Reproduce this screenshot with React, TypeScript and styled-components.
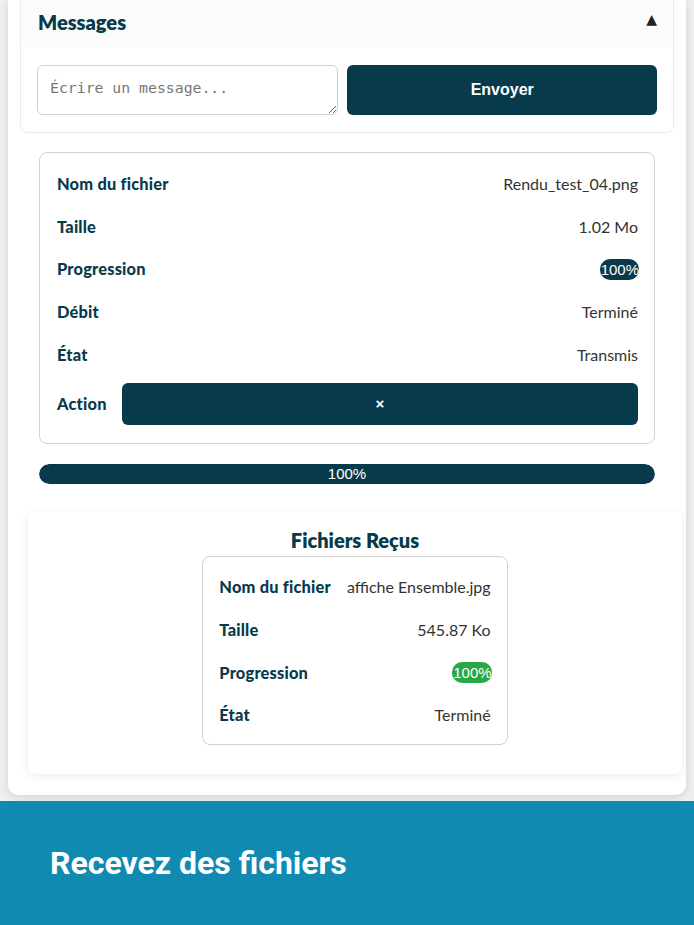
import React from "react";
import styled, { createGlobalStyle } from "styled-components";

const Global = createGlobalStyle`
  html, body { margin: 0; padding: 0; background: #efefef; }
  body { font-family: Lato, "Noto Sans", sans-serif; color: #333; overflow: hidden; }
  * { box-sizing: border-box; }
`;

const NAVY = "#073b4c";

const Page = styled.div`
  display: flex;
  flex-direction: column;
`;

const MainCard = styled.div`
  margin: 0 8px;
  background: #fff;
  border-radius: 0 0 10px 10px;
  box-shadow: 0 2px 8px rgba(0, 0, 0, 0.12);
  padding: 0 12px 21px;
  display: flex;
  flex-direction: column;
`;

const MessagesCard = styled.section`
  border: 1px solid #ececec;
  border-top: none;
  border-radius: 0 0 8px 8px;
  background: #fff;
`;

const MessagesHeader = styled.div`
  height: 47px;
  background: #fbfbfb;
  display: flex;
  align-items: center;
  justify-content: space-between;
  padding: 0 16px 4px 17px;
`;

const HeaderTitle = styled.h3`
  margin: 0;
  font-size: 20px;
  font-weight: 800;
  color: ${NAVY};
`;

const Caret = styled.span`
  font-family: "DejaVu Sans", sans-serif;
  font-size: 14px;
  color: #222;
  margin-top: -6px;
`;

const MessageForm = styled.div`
  display: grid;
  grid-template-columns: 301fr 309fr;
  gap: 9px;
  padding: 18px 16px 17px;
`;

const MessageInput = styled.textarea`
  height: 50px;
  border: 1px solid #cfcfcf;
  border-radius: 6px;
  padding: 13px 12px;
  font-family: "DejaVu Sans Mono", monospace;
  font-size: 14.8px;
  resize: vertical;
  &::placeholder { color: #767676; }
`;

const SendButton = styled.button`
  height: 50px;
  border: none;
  border-radius: 6px;
  background: ${NAVY};
  color: #fff;
  font-family: "Liberation Sans", Arial, sans-serif;
  font-weight: 700;
  font-size: 16px;
`;

const InfoCard = styled.div<{ $centered?: boolean }>`
  border: 1px solid #d2d2d2;
  border-radius: 8px;
  display: flex;
  flex-direction: column;
  ${(p) =>
    p.$centered
      ? `align-self: center; margin-top: 4px; padding: 9px 16px 7px 16px; width: max-content;`
      : `margin: 19px 19px 0; padding: 9.5px 16px 12px 17px;`}
`;

const Row = styled.div`
  min-height: 42.7px;
  display: flex;
  align-items: center;
  justify-content: space-between;
  gap: 16px;
  font-size: 16px;
  line-height: 20px;
`;

const ActionRow = styled(Row)`
  padding: 7px 0 6px;
  gap: 15px;
`;

const Label = styled.span`
  font-weight: 900;
  font-size: 16.4px;
  letter-spacing: 0.2px;
  color: ${NAVY};
`;

const Value = styled.span`
  color: #333;
`;

const Badge = styled.span<{ $tone: "navy" | "green" }>`
  background: ${(p) => (p.$tone === "navy" ? NAVY : "#28a745")};
  color: #fff;
  border-radius: 10px;
  font-family: "Liberation Sans", Arial, sans-serif;
  font-size: 15px;
  line-height: 21px;
  padding: 0 0 0 1px;
  margin-right: -1px;
`;

const CancelButton = styled.button`
  flex: 1;
  height: 42px;
  border: none;
  border-radius: 6px;
  background: ${NAVY};
  color: #fff;
  font-family: "Liberation Sans", Arial, sans-serif;
  font-weight: 700;
  font-size: 15px;
`;

const ProgressTrack = styled.div`
  margin: 20px 19px 0;
  height: 20px;
  border-radius: 10px;
  background: #e9ecef;
  overflow: hidden;
`;

const ProgressFill = styled.div`
  height: 100%;
  background: ${NAVY};
  border-radius: 10px;
  color: #fff;
  font-family: "Liberation Sans", Arial, sans-serif;
  font-size: 15px;
  line-height: 20px;
  text-align: center;
`;

const ReceivedCard = styled.section`
  margin: 27px -8px 0 8px;
  background: #fff;
  border-radius: 8px;
  box-shadow: 0 2px 10px rgba(0, 0, 0, 0.08);
  padding: 17px 0 29px;
  display: flex;
  flex-direction: column;
`;

const ReceivedTitle = styled.h4`
  margin: 0;
  text-align: center;
  font-size: 20px;
  line-height: 24px;
  font-weight: 800;
  color: ${NAVY};
`;

const Banner = styled.div`
  margin-top: 6px;
  background: #118ab2;
  padding: 44px 50px 50px;
  height: 130px;
`;

const BannerTitle = styled.h2`
  margin: 0;
  font-family: Roboto, sans-serif;
  font-weight: 700;
  font-size: 32px;
  line-height: 36px;
  color: #fff;
`;

export default function App() {
  const pct = 100;
  return (
    <Page>
      <Global />
      <MainCard>
        <MessagesCard>
          <MessagesHeader>
            <HeaderTitle>Messages</HeaderTitle>
            <Caret>▲</Caret>
          </MessagesHeader>
          <MessageForm>
            <MessageInput placeholder="Écrire un message..." />
            <SendButton>Envoyer</SendButton>
          </MessageForm>
        </MessagesCard>

        <InfoCard>
          <Row>
            <Label>Nom du fichier</Label>
            <Value>Rendu_test_04.png</Value>
          </Row>
          <Row>
            <Label>Taille</Label>
            <Value>1.02 Mo</Value>
          </Row>
          <Row>
            <Label>Progression</Label>
            <Badge $tone="navy">100%</Badge>
          </Row>
          <Row>
            <Label>Débit</Label>
            <Value>Terminé</Value>
          </Row>
          <Row>
            <Label>État</Label>
            <Value>Transmis</Value>
          </Row>
          <ActionRow>
            <Label>Action</Label>
            <CancelButton>×</CancelButton>
          </ActionRow>
        </InfoCard>

        <ProgressTrack>
          <ProgressFill style={{ width: `${pct}%` }}>{pct}%</ProgressFill>
        </ProgressTrack>

        <ReceivedCard>
          <ReceivedTitle>Fichiers Reçus</ReceivedTitle>
          <InfoCard $centered>
            <Row>
              <Label>Nom du fichier</Label>
              <Value>affiche Ensemble.jpg</Value>
            </Row>
            <Row>
              <Label>Taille</Label>
              <Value>545.87 Ko</Value>
            </Row>
            <Row>
              <Label>Progression</Label>
              <Badge $tone="green">100%</Badge>
            </Row>
            <Row>
              <Label>État</Label>
              <Value>Terminé</Value>
            </Row>
          </InfoCard>
        </ReceivedCard>
      </MainCard>
      <Banner>
        <BannerTitle>Recevez des fichiers</BannerTitle>
      </Banner>
    </Page>
  );
}
